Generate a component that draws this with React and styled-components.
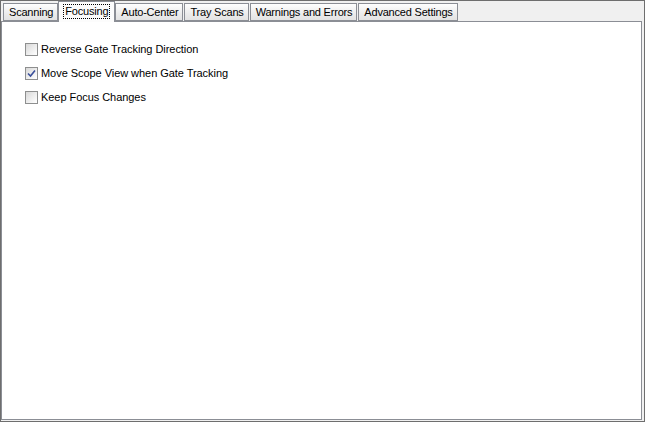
import styled, { createGlobalStyle } from "styled-components";

const GlobalStyle = createGlobalStyle`
  body {
    margin: 0;
    background: #f0f0f0;
  }
`;

const Window = styled.div`
  box-sizing: border-box;
  width: 645px;
  height: 422px;
  display: flex;
  flex-direction: column;
  border: 1px solid #6e6e6e;
  background: #f0f0f0;
  padding: 0 2px 1px 0;
  font-family: "Liberation Sans", Arial, sans-serif;
  font-size: 11px;
  color: #000;
`;

const TabStrip = styled.div`
  display: flex;
  align-items: flex-end;
  height: 20px;
  padding-left: 2px;
  position: relative;
  z-index: 1;
`;

const Tab = styled.div`
  box-sizing: border-box;
  display: flex;
  align-items: center;
  height: ${(p) => (p.$active ? "21px" : "18px")};
  margin: ${(p) => (p.$active ? "0 0 -1px -1px" : "0 1px 0 0")};
  padding: ${(p) => (p.$active ? "0 5px 2px" : "0 4px 1px 5px")};
  border: 1px solid #8b8e95;
  border-bottom: ${(p) => (p.$active ? "none" : "1px solid #8b8e95")};
  background: ${(p) =>
    p.$active ? "#fcfcfc" : "linear-gradient(#fefefe, #ececec 60%, #e3e3e3)"};
  white-space: nowrap;
  letter-spacing: -0.2px;
`;

const FocusLabel = styled.span`
  padding: 0 1px;
  outline: 1px dotted #000;
  line-height: 13px;
`;

const Panel = styled.div`
  flex: 1;
  box-sizing: border-box;
  border: 1px solid #8b8e95;
  background: #fff;
  padding: 21px 23px;
  display: flex;
  flex-direction: column;
  gap: 11px;
`;

const Row = styled.label`
  display: flex;
  align-items: center;
  gap: 3px;
  height: 13px;
`;

const Box = styled.span`
  box-sizing: border-box;
  width: 13px;
  height: 13px;
  border: 1px solid #8e8f8f;
  background: linear-gradient(135deg, #d8d8d8, #f6f6f6 75%, #ffffff);
  display: flex;
  align-items: center;
  justify-content: center;
`;

const Label = styled.span`
  line-height: 13px;
  letter-spacing: -0.05px;
`;

const Check = () => (
  <svg width="9" height="9" viewBox="0 0 9 9">
    <path d="M1 4.5 L3.5 7 L8 1.5" fill="none" stroke="#3a4f9a" strokeWidth="1.6" />
  </svg>
);

const CheckRow = ({ checked, children }) => (
  <Row>
    <Box>{checked && <Check />}</Box>
    <Label>{children}</Label>
  </Row>
);

const tabs = ["Scanning", "Focusing", "Auto-Center", "Tray Scans", "Warnings and Errors", "Advanced Settings"];

export default function App() {
  return (
    <>
      <GlobalStyle />
      <Window>
        <TabStrip>
          {tabs.map((t) =>
            t === "Focusing" ? (
              <Tab key={t} $active>
                <FocusLabel>{t}</FocusLabel>
              </Tab>
            ) : (
              <Tab key={t}>{t}</Tab>
            )
          )}
        </TabStrip>
        <Panel>
          <CheckRow>Reverse Gate Tracking Direction</CheckRow>
          <CheckRow checked>Move Scope View when Gate Tracking</CheckRow>
          <CheckRow>Keep Focus Changes</CheckRow>
        </Panel>
      </Window>
    </>
  );
}
